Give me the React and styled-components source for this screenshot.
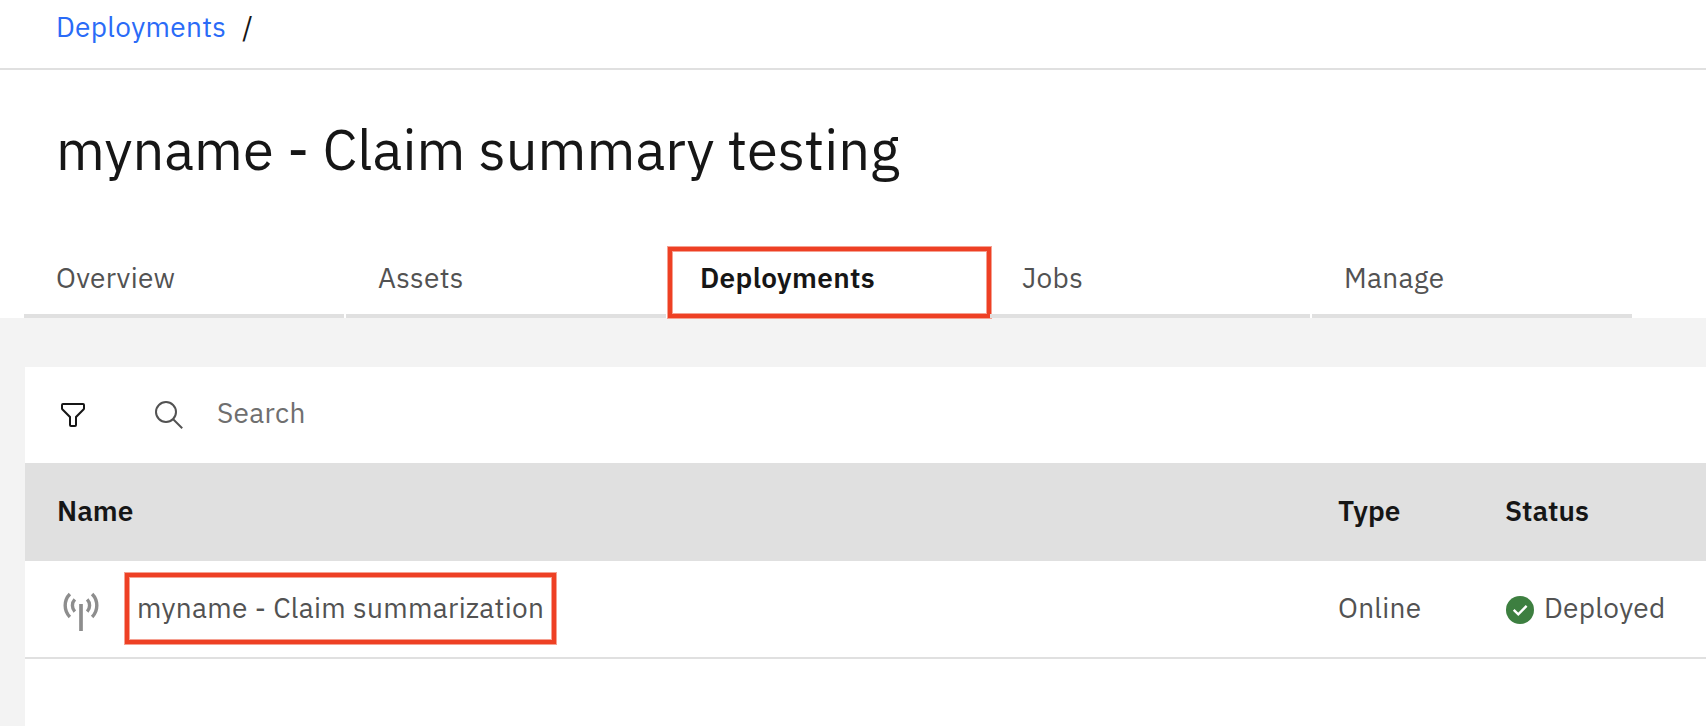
import React from 'react';
import styled, { createGlobalStyle } from 'styled-components';

const GlobalStyle = createGlobalStyle`
  * { box-sizing: border-box; }
  body {
    margin: 0;
    background: #ffffff;
    color: #161616;
    font-family: "IBM Plex Sans", Roboto, "Liberation Sans", sans-serif;
    font-size: 28px;
    letter-spacing: 0.32px;
    line-height: 36px;
    overflow: hidden;
  }
`;

const Page = styled.div`
  display: flex;
  flex-direction: column;
  height: 726px;
  background: #f3f3f3;
`;

const Breadcrumb = styled.nav`
  display: flex;
  gap: 16px;
  height: 70px;
  padding: 9px 56px 0;
  background: #ffffff;
  border-bottom: 2px solid #e0e0e0;
`;

const BreadcrumbLink = styled.a`
  color: #2a6bf7;
`;

const Header = styled.header`
  display: flex;
  flex-direction: column;
  justify-content: space-between;
  height: 248px;
  padding: 43px 0 0 24px;
  background: #ffffff;
`;

const Title = styled.h1`
  margin: 0;
  padding-left: 32px;
  font-size: 56px;
  font-weight: 400;
  line-height: 72px;
  letter-spacing: 0;
`;

const Tabs = styled.div`
  display: flex;
  gap: 2px;
  height: 72px;
`;

const Tab = styled.div`
  position: relative;
  width: 320px;
  padding: 14px 32px 0;
  border-bottom: 4px solid #e0e0e0;
  color: ${(p) => (p.$active ? '#161616' : '#525252')};
  font-weight: ${(p) => (p.$active ? 600 : 400)};
`;

const Highlight = styled.span`
  position: absolute;
  inset: ${(p) => p.$inset};
  border: 4px solid #ee4024;
  box-shadow: 0 0 0 1px #f5a192, inset 0 0 0 1px #f5a192;
`;

const Panel = styled.main`
  flex: 1;
  margin: 49px 0 0 25px;
  background: #ffffff;
`;

const Toolbar = styled.div`
  display: flex;
  align-items: center;
  height: 96px;
  padding-left: 32px;
`;

const SearchField = styled.div`
  display: flex;
  align-items: center;
  gap: 32px;
  margin-left: 64px;
`;

const Placeholder = styled.span`
  padding-bottom: 5px;
  color: #6f6f6f;
`;

const Row = styled.div`
  display: grid;
  grid-template-columns: 1281px 167px 1fr;
  align-items: center;
  height: 98px;
  padding: 0 0 ${(p) => (p.$head ? '2px' : '3px')} 32px;
  background: ${(p) => (p.$head ? '#e0e0e0' : '#ffffff')};
  border-bottom: ${(p) => (p.$head ? 'none' : '2px solid #e0e0e0')};
  color: ${(p) => (p.$head ? '#161616' : '#525252')};
  font-weight: ${(p) => (p.$head ? 600 : 400)};
  letter-spacing: ${(p) => (p.$head ? '0' : '0.32px')};
`;

const Cell = styled.div`
  display: flex;
  align-items: center;
  white-space: nowrap;
`;

const AssetIcon = styled.span`
  margin-left: 6px;
`;

const AssetName = styled.span`
  position: relative;
  margin-left: 38px;
`;

const StatusBadge = styled.span`
  display: flex;
  align-items: center;
  gap: 10px;
  margin-left: 1px;
`;

const Icon = styled.svg`
  display: block;
  flex: none;
  width: ${(p) => p.$w}px;
  height: ${(p) => p.$h}px;
  margin-top: ${(p) => p.$drop || 0}px;
`;

const FilterIcon = () => (
  <Icon $w={32} $h={32} viewBox="0 0 32 32" fill="#161616">
    <path d="M18 28H14a2 2 0 0 1-2-2V18.41L4.59 11A2 2 0 0 1 4 9.59V6A2 2 0 0 1 6 4H26a2 2 0 0 1 2 2V9.59A2 2 0 0 1 27.41 11L20 18.41V26A2 2 0 0 1 18 28ZM6 6V9.59l8 8V26h4V17.59l8-8V6Z" />
  </Icon>
);

const SearchIcon = () => (
  <Icon $w={32} $h={32} viewBox="0 0 32 32" fill="none" stroke="#525252" strokeWidth="2">
    <circle cx="13" cy="13" r="10" />
    <path d="M20.2 20.2L29.2 29.2" />
  </Icon>
);

const AntennaIcon = () => (
  <Icon $w={36} $h={40} $drop={9} viewBox="0 0 36 40" fill="none" stroke="#8d8d8d" strokeWidth="3.4">
    <path d="M6.9 2a16.4 16.4 0 0 0 0 23" />
    <path d="M11.8 7.4a9 9 0 0 0 0 12.2" />
    <path d="M24.2 7.4a9 9 0 0 1 0 12.2" />
    <path d="M29.1 2a16.4 16.4 0 0 1 0 23" />
    <path d="M18 12V39" strokeWidth="3.7" />
  </Icon>
);

const DeployedIcon = () => (
  <Icon $w={28} $h={28} $drop={5} viewBox="0 0 28 28">
    <circle cx="14" cy="14" r="14" fill="#3d7f40" />
    <path d="M7.7 13.9l4.6 4.4 8.3-8.4" fill="none" stroke="#ffffff" strokeWidth="2.4" />
  </Icon>
);

const TABS = ['Overview', 'Assets', 'Deployments', 'Jobs', 'Manage'];

export default function App() {
  return (
    <>
      <GlobalStyle />
      <Page>
        <Breadcrumb>
          <BreadcrumbLink>Deployments</BreadcrumbLink>
          <span>/</span>
        </Breadcrumb>
        <Header>
          <Title>myname - Claim summary testing</Title>
          <Tabs>
            {TABS.map((name) => (
              <Tab key={name} $active={name === 'Deployments'}>
                {name}
                {name === 'Deployments' && <Highlight $inset="1px -3px -4px 0" />}
              </Tab>
            ))}
          </Tabs>
        </Header>
        <Panel>
          <Toolbar>
            <FilterIcon />
            <SearchField>
              <SearchIcon />
              <Placeholder>Search</Placeholder>
            </SearchField>
          </Toolbar>
          <Row $head>
            <Cell>Name</Cell>
            <Cell>Type</Cell>
            <Cell>Status</Cell>
          </Row>
          <Row>
            <Cell>
              <AssetIcon>
                <AntennaIcon />
              </AssetIcon>
              <AssetName>
                myname - Claim summarization
                <Highlight $inset="-17px -12px -18px -12px" />
              </AssetName>
            </Cell>
            <Cell>Online</Cell>
            <Cell>
              <StatusBadge>
                <DeployedIcon />
                Deployed
              </StatusBadge>
            </Cell>
          </Row>
        </Panel>
      </Page>
    </>
  );
}
